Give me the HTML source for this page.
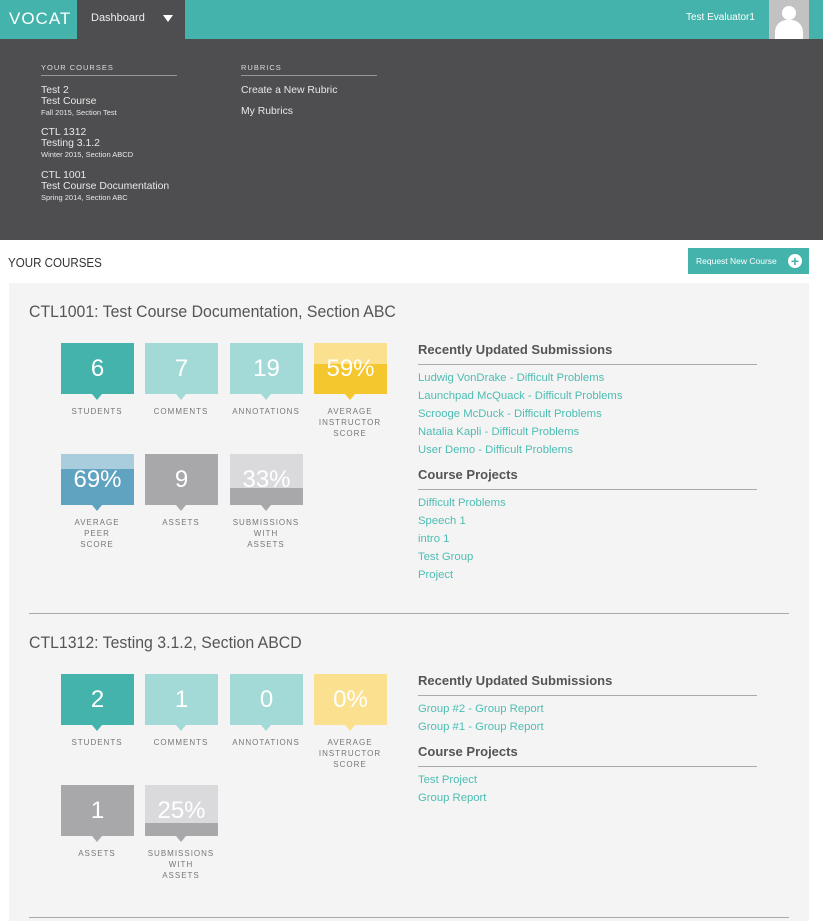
<!DOCTYPE html>
<html><head><meta charset="utf-8"><style>
*{margin:0;padding:0;box-sizing:border-box}
body{width:823px;height:921px;overflow:hidden;background:#fff;font-family:"Liberation Sans",sans-serif;position:relative}
.a{position:absolute;white-space:nowrap}
.tile{position:absolute;width:73px;height:51px;color:#fff;font-size:24px;text-align:center;line-height:51px}
.tile:after{content:"";position:absolute;left:31px;bottom:-6px;border-left:5px solid transparent;border-right:5px solid transparent;border-top:6px solid var(--c)}
.tile span{position:relative}
.lab{position:absolute;width:90px;text-align:center;font-size:8px;letter-spacing:1px;color:#777;line-height:11px}
.h{position:absolute;font-size:13px;font-weight:bold;color:#555;left:418px}
.ln{position:absolute;left:418px;width:339px;height:1px;background:#aaa}
.lk{position:absolute;left:418px;font-size:11.3px;color:#4dbdb3}
.dd{position:absolute;color:#e8e8e8;font-size:10.4px;line-height:11px}
</style></head><body>
<div class="a" style="left:0;top:0;width:823px;height:39px;background:#43b3ac"></div>
<div class="a" style="left:9px;top:9px;color:#fff;font-size:17px;letter-spacing:1px">VOCAT</div>
<div class="a" style="left:77px;top:0;width:108px;height:39px;background:#4e4e50"></div>
<div class="a" style="left:91px;top:12px;color:#eee;font-size:11px">Dashboard</div>
<div class="a" style="left:163px;top:15px;border-left:5px solid transparent;border-right:5px solid transparent;border-top:7px solid #fff"></div>
<div class="a" style="left:686px;top:12px;color:#fff;font-size:10px">Test Evaluator1</div>
<div class="a" style="left:769px;top:0;width:40px;height:39px;background:#c2c2c2;overflow:hidden">
<div class="a" style="left:13px;top:6px;width:14px;height:14px;border-radius:50%;background:#fff"></div>
<div class="a" style="left:6px;top:20px;width:28px;height:26px;border-radius:12px 12px 0 0;background:#fff"></div></div>
<div class="a" style="left:0;top:39px;width:823px;height:201px;background:#4e4e50"></div>
<div class="dd" style="left:41px;top:62px;font-size:7.5px;letter-spacing:1px;color:#ddd">YOUR COURSES</div>
<div class="a" style="left:41px;top:75px;width:136px;height:1px;background:#999"></div>
<div class="dd" style="left:241px;top:62px;font-size:7.5px;letter-spacing:1px;color:#ddd">RUBRICS</div>
<div class="a" style="left:241px;top:75px;width:136px;height:1px;background:#999"></div>
<div class="dd" style="left:41px;top:85px">Test 2<br>Test Course<br><span style="font-size:7.5px">Fall 2015, Section Test</span></div>
<div class="dd" style="left:41px;top:127px">CTL 1312<br>Testing 3.1.2<br><span style="font-size:7.5px">Winter 2015, Section ABCD</span></div>
<div class="dd" style="left:41px;top:170px">CTL 1001<br>Test Course Documentation<br><span style="font-size:7.5px">Spring 2014, Section ABC</span></div>
<div class="dd" style="left:241px;top:85px">Create a New Rubric</div>
<div class="dd" style="left:241px;top:106px">My Rubrics</div>
<div class="a" style="left:8px;top:255px;font-size:13px;color:#333;transform:scaleX(0.89);transform-origin:0 0">YOUR COURSES</div>
<div class="a" style="left:688px;top:248px;width:121px;height:26px;background:#43b3ac;color:#fff;font-size:8.5px;line-height:26px;padding-left:8px">Request New Course</div>
<div class="a" style="left:788px;top:254px;width:14px;height:14px;border-radius:50%;background:#fff;color:#43b3ac;font-size:14px;line-height:14px;text-align:center;font-weight:bold">+</div>
<div class="a" style="left:9px;top:283px;width:800px;height:638px;background:#f4f4f4"></div>
<div class="a" style="left:29px;top:303px;font-size:16.5px;color:#555;transform:scaleX(0.96);transform-origin:0 0">CTL1001: Test Course Documentation, Section ABC</div>

<div class="tile" style="left:61px;top:343px;background:#43b3ac;--c:#43b3ac"><span>6</span></div>
<div class="tile" style="left:145px;top:343px;background:#a3dad7;--c:#a3dad7"><span>7</span></div>
<div class="tile" style="left:230px;top:343px;background:#a3dad7;--c:#a3dad7"><span>19</span></div>
<div class="tile" style="left:314px;top:343px;background:linear-gradient(#fbe18f 0 21px,#f4c72f 21px);--c:#f4c72f"><span>59%</span></div>
<div class="lab" style="left:52px;top:406px">STUDENTS</div>
<div class="lab" style="left:136px;top:406px">COMMENTS</div>
<div class="lab" style="left:221px;top:406px">ANNOTATIONS</div>
<div class="lab" style="left:305px;top:406px">AVERAGE<br>INSTRUCTOR<br>SCORE</div>
<div class="tile" style="left:61px;top:454px;background:linear-gradient(#a9cddc 0 15px,#5fa3c0 15px);--c:#5fa3c0"><span>69%</span></div>
<div class="tile" style="left:145px;top:454px;background:#a8a8ab;--c:#a8a8ab"><span>9</span></div>
<div class="tile" style="left:230px;top:454px;background:linear-gradient(#dadadc 0 34px,#a8a8ab 34px);--c:#a8a8ab"><span>33%</span></div>
<div class="lab" style="left:52px;top:517px">AVERAGE<br>PEER<br>SCORE</div>
<div class="lab" style="left:136px;top:517px">ASSETS</div>
<div class="lab" style="left:221px;top:517px">SUBMISSIONS<br>WITH<br>ASSETS</div>

<div class="h" style="top:342px">Recently Updated Submissions</div>
<div class="ln" style="top:364px"></div>
<div class="lk" style="top:372px">Ludwig VonDrake - Difficult Problems</div>
<div class="lk" style="top:390px">Launchpad McQuack - Difficult Problems</div>
<div class="lk" style="top:408px">Scrooge McDuck - Difficult Problems</div>
<div class="lk" style="top:426px">Natalia Kapli - Difficult Problems</div>
<div class="lk" style="top:444px">User Demo - Difficult Problems</div>
<div class="h" style="top:467px">Course Projects</div>
<div class="ln" style="top:489px"></div>
<div class="lk" style="top:497px">Difficult Problems</div>
<div class="lk" style="top:515px">Speech 1</div>
<div class="lk" style="top:533px">intro 1</div>
<div class="lk" style="top:551px">Test Group</div>
<div class="lk" style="top:569px">Project</div>

<div class="a" style="left:29px;top:613px;width:760px;height:1px;background:#aaa"></div>
<div class="a" style="left:29px;top:634px;font-size:16.5px;color:#555;transform:scaleX(0.96);transform-origin:0 0">CTL1312: Testing 3.1.2, Section ABCD</div>
<div class="tile" style="left:61px;top:674px;background:#43b3ac;--c:#43b3ac"><span>2</span></div>
<div class="tile" style="left:145px;top:674px;background:#a3dad7;--c:#a3dad7"><span>1</span></div>
<div class="tile" style="left:230px;top:674px;background:#a3dad7;--c:#a3dad7"><span>0</span></div>
<div class="tile" style="left:314px;top:674px;background:#fbe18f;--c:#fbe18f"><span>0%</span></div>
<div class="lab" style="left:52px;top:737px">STUDENTS</div>
<div class="lab" style="left:136px;top:737px">COMMENTS</div>
<div class="lab" style="left:221px;top:737px">ANNOTATIONS</div>
<div class="lab" style="left:305px;top:737px">AVERAGE<br>INSTRUCTOR<br>SCORE</div>
<div class="tile" style="left:61px;top:785px;background:#a8a8ab;--c:#a8a8ab"><span>1</span></div>
<div class="tile" style="left:145px;top:785px;background:linear-gradient(#dadadc 0 38px,#a8a8ab 38px);--c:#a8a8ab"><span>25%</span></div>
<div class="lab" style="left:52px;top:848px">ASSETS</div>
<div class="lab" style="left:136px;top:848px">SUBMISSIONS<br>WITH<br>ASSETS</div>

<div class="h" style="top:673px">Recently Updated Submissions</div>
<div class="ln" style="top:695px"></div>
<div class="lk" style="top:703px">Group #2 - Group Report</div>
<div class="lk" style="top:721px">Group #1 - Group Report</div>
<div class="h" style="top:744px">Course Projects</div>
<div class="ln" style="top:766px"></div>
<div class="lk" style="top:774px">Test Project</div>
<div class="lk" style="top:792px">Group Report</div>
<div class="a" style="left:29px;top:917px;width:760px;height:1px;background:#aaa"></div>
</body></html>
